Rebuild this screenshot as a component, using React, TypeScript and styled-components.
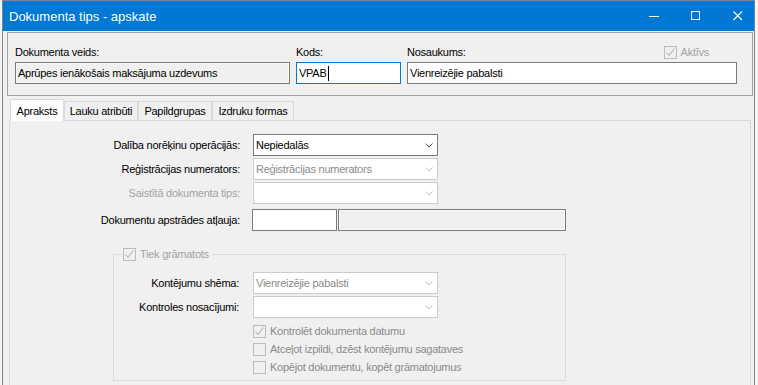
import styled, { createGlobalStyle } from 'styled-components';

const GlobalStyle = createGlobalStyle`
  * {
    box-sizing: border-box;
  }
  html,
  body {
    margin: 0;
    padding: 0;
  }
  body {
    width: 758px;
    height: 385px;
    overflow: hidden;
    background: #f4f4f4;
    font-family: 'Liberation Sans', Arial, sans-serif;
    font-size: 11px;
    letter-spacing: -0.25px;
    color: #000;
  }
`;

const Window = styled.div`
  margin-left: 2px;
  width: 753px;
  height: 385px;
  border: 1px solid #7d8793;
  border-bottom: none;
  background: #f0f0f0;
  display: flex;
  flex-direction: column;
`;

const TitleBar = styled.header`
  flex: none;
  height: 30px;
  display: flex;
  align-items: center;
  padding-left: 6px;
  background: #0078d4;
  color: #fff;
  overflow: hidden;
  > h1 {
    margin: 0;
    font-size: 13px;
    font-weight: normal;
    letter-spacing: 0;
  }
`;

const WindowButtons = styled.div`
  margin-left: auto;
  margin-right: -5px;
  display: flex;
`;

const WindowButton = styled.button.attrs({ type: 'button' })`
  width: 42px;
  height: 30px;
  border: 0;
  padding: 0;
  background: transparent;
  display: flex;
  align-items: center;
  justify-content: center;
  > svg {
    display: block;
  }
`;

const HeaderPanel = styled.div`
  flex: none;
  margin: 1px 0 0 4px;
  width: 746px;
  height: 64px;
  border: 1px solid #a0a0a0;
  padding: 12px 0 0 7px;
`;

const HeaderGrid = styled.div`
  display: grid;
  grid-template-columns: 275px 105px 330px;
  grid-template-rows: 14px 22px;
  column-gap: 6px;
  row-gap: 3px;
`;

const TopLabel = styled.div`
  display: flex;
  align-items: center;
  line-height: 14px;
  white-space: nowrap;
`;

const TextBox = styled.div<{ $readOnly?: boolean; $focused?: boolean; $width?: number }>`
  width: ${(p) => (p.$width ? `${p.$width}px` : 'auto')};
  height: 22px;
  display: flex;
  align-items: center;
  padding: 0 2px;
  line-height: 20px;
  white-space: nowrap;
  overflow: hidden;
  background: ${(p) => (p.$readOnly ? '#f0f0f0' : '#fff')};
  border: 1px solid ${(p) => (p.$focused ? '#0078d7' : '#7a7a7a')};
  box-shadow: ${(p) => (p.$readOnly ? 'inset 0 0 0 1px #fbfbfb' : 'none')};
`;

const Caret = styled.span`
  display: inline-block;
  width: 1px;
  height: 15px;
  margin-left: 1px;
  background: #000;
`;

const CheckLabel = styled.div<{ $muted?: boolean }>`
  display: flex;
  align-items: center;
  gap: 4px;
  white-space: nowrap;
  color: ${(p) => (p.$muted ? '#a3a3a3' : '#8a8a8a')};
`;

const Box = styled.span`
  flex: none;
  width: 13px;
  height: 13px;
  border: 1px solid #bcbcbc;
  background: #f0f0f0;
  display: flex;
  align-items: center;
  justify-content: center;
  > svg {
    display: block;
  }
`;

const TabStrip = styled.nav`
  flex: none;
  position: relative;
  z-index: 1;
  margin: 3px 0 0 6px;
  height: 21px;
  display: flex;
  align-items: flex-end;
`;

const Tab = styled.div<{ $active?: boolean; $width: number }>`
  width: ${(p) => p.$width}px;
  height: ${(p) => (p.$active ? 22 : 19)}px;
  margin-bottom: ${(p) => (p.$active ? -1 : 0)}px;
  margin-left: ${(p) => (p.$active ? 1 : 0)}px;
  border: 1px solid #d9d9d9;
  border-bottom: none;
  background: ${(p) => (p.$active ? '#fff' : '#f0f0f0')};
  display: flex;
  align-items: center;
  justify-content: center;
  white-space: nowrap;
`;

const TabPage = styled.section`
  flex: 1;
  margin-left: 6px;
  width: 742px;
  border: 1px solid #d9d9d9;
  border-bottom: none;
  background: #f0f0f0;
  padding-top: 13px;
`;

const FieldRow = styled.div<{ $top?: number }>`
  display: flex;
  align-items: center;
  height: 22px;
  margin-top: ${(p) => p.$top ?? 0}px;
`;

const FieldLabel = styled.label<{ $width: number; $gap: number; $disabled?: boolean }>`
  flex: none;
  width: ${(p) => p.$width}px;
  margin-right: ${(p) => p.$gap}px;
  text-align: right;
  white-space: nowrap;
  color: ${(p) => (p.$disabled ? '#a3a3a3' : '#000')};
`;

const Combo = styled.div<{ $disabled?: boolean }>`
  flex: none;
  width: 185px;
  height: 22px;
  display: flex;
  align-items: center;
  padding: 0 4px 0 2px;
  background: #fff;
  border: 1px solid ${(p) => (p.$disabled ? '#cccccc' : '#7a7a7a')};
  color: ${(p) => (p.$disabled ? '#8a8a8a' : '#000')};
  white-space: nowrap;
  > span {
    flex: 1;
  }
  > svg {
    display: block;
    stroke: ${(p) => (p.$disabled ? '#bfbfbf' : '#505050')};
  }
`;

const FieldGap = styled.div`
  width: 1px;
  flex: none;
`;

const GroupBox = styled.fieldset`
  margin: 16px 0 0 103px;
  width: 453px;
  border: 1px solid #dcdcdc;
  padding: 11px 0 4px 0;
  > legend {
    margin-left: 7px;
    padding: 0 3px 0 2px;
    height: 14px;
    display: flex;
    align-items: center;
  }
`;

const CheckRow = styled.div`
  height: 18px;
  margin-left: 139px;
  display: flex;
  align-items: center;
`;

const Chevron = () => (
  <svg width="8" height="5" viewBox="0 0 8 5" fill="none" strokeWidth="1">
    <polyline points="0.5,0.5 4,4 7.5,0.5" />
  </svg>
);

const CheckBox = ({ checked, label, muted }: { checked?: boolean; label: string; muted?: boolean }) => (
  <CheckLabel $muted={muted}>
    <Box>
      {checked && (
        <svg width="11" height="11" viewBox="0 0 11 11" fill="none">
          <polyline points="1.5,5.5 4,8.5 9.5,1.5" stroke="#a8a8a8" strokeWidth="1" />
        </svg>
      )}
    </Box>
    {label}
  </CheckLabel>
);

const tabs = [
  { name: 'Apraksts', width: 54 },
  { name: 'Lauku atribūti', width: 74 },
  { name: 'Papildgrupas', width: 74 },
  { name: 'Izdruku formas', width: 82 },
];

const App = () => (
  <>
    <GlobalStyle />
    <Window>
      <TitleBar>
        <h1>Dokumenta tips - apskate</h1>
        <WindowButtons>
          <WindowButton aria-label="Minimize">
            <svg width="10" height="10" viewBox="0 0 10 10">
              <line x1="0" y1="5.5" x2="10" y2="5.5" stroke="#fff" strokeWidth="1" />
            </svg>
          </WindowButton>
          <WindowButton aria-label="Maximize">
            <svg width="10" height="10" viewBox="0 0 10 10" fill="none">
              <rect x="0.5" y="0.5" width="8" height="8" stroke="#fff" strokeWidth="1" />
            </svg>
          </WindowButton>
          <WindowButton aria-label="Close">
            <svg width="10" height="10" viewBox="0 0 10 10">
              <path d="M0.5 0.5L9 9M9 0.5L0.5 9" stroke="#fff" strokeWidth="1.1" />
            </svg>
          </WindowButton>
        </WindowButtons>
      </TitleBar>

      <HeaderPanel>
        <HeaderGrid>
          <TopLabel>Dokumenta veids:</TopLabel>
          <TopLabel>Kods:</TopLabel>
          <TopLabel>
            Nosaukums:
            <div style={{ marginLeft: 'auto', paddingRight: 28 }}>
              <CheckBox checked muted label="Aktīvs" />
            </div>
          </TopLabel>
          <TextBox $readOnly>Aprūpes ienākošais maksājuma uzdevums</TextBox>
          <TextBox $focused>
            VPAB
            <Caret />
          </TextBox>
          <TextBox>Vienreizējie pabalsti</TextBox>
        </HeaderGrid>
      </HeaderPanel>

      <TabStrip>
        {tabs.map((t, i) => (
          <Tab key={t.name} $active={i === 0} $width={t.width}>
            {t.name}
          </Tab>
        ))}
      </TabStrip>

      <TabPage>
        <FieldRow>
          <FieldLabel $width={230} $gap={13}>
            Dalība norēķinu operācijās:
          </FieldLabel>
          <Combo>
            <span>Nepiedalās</span>
            <Chevron />
          </Combo>
        </FieldRow>
        <FieldRow $top={2}>
          <FieldLabel $width={230} $gap={13}>
            Reģistrācijas numerators:
          </FieldLabel>
          <Combo $disabled>
            <span>Reģistrācijas numerators</span>
            <Chevron />
          </Combo>
        </FieldRow>
        <FieldRow $top={2}>
          <FieldLabel $width={230} $gap={13} $disabled>
            Saistītā dokumenta tips:
          </FieldLabel>
          <Combo $disabled>
            <span />
            <Chevron />
          </Combo>
        </FieldRow>
        <FieldRow $top={5}>
          <FieldLabel $width={230} $gap={12}>
            Dokumentu apstrādes atļauja:
          </FieldLabel>
          <TextBox $width={85} />
          <FieldGap />
          <TextBox $width={228} $readOnly />
        </FieldRow>

        <GroupBox>
          <legend>
            <CheckBox checked muted label="Tiek grāmatots" />
          </legend>
          <FieldRow>
            <FieldLabel $width={125} $gap={14}>
              Kontējumu shēma:
            </FieldLabel>
            <Combo $disabled>
              <span>Vienreizējie pabalsti</span>
              <Chevron />
            </Combo>
          </FieldRow>
          <FieldRow $top={2}>
            <FieldLabel $width={125} $gap={14}>
              Kontroles nosacījumi:
            </FieldLabel>
            <Combo $disabled>
              <span />
              <Chevron />
            </Combo>
          </FieldRow>
          <div style={{ height: 4 }} />
          <CheckRow>
            <CheckBox checked label="Kontrolēt dokumenta datumu" />
          </CheckRow>
          <CheckRow>
            <CheckBox label="Atceļot izpildi, dzēst kontējumu sagataves" />
          </CheckRow>
          <CheckRow>
            <CheckBox label="Kopējot dokumentu, kopēt grāmatojumus" />
          </CheckRow>
        </GroupBox>
      </TabPage>
    </Window>
  </>
);

export default App;
